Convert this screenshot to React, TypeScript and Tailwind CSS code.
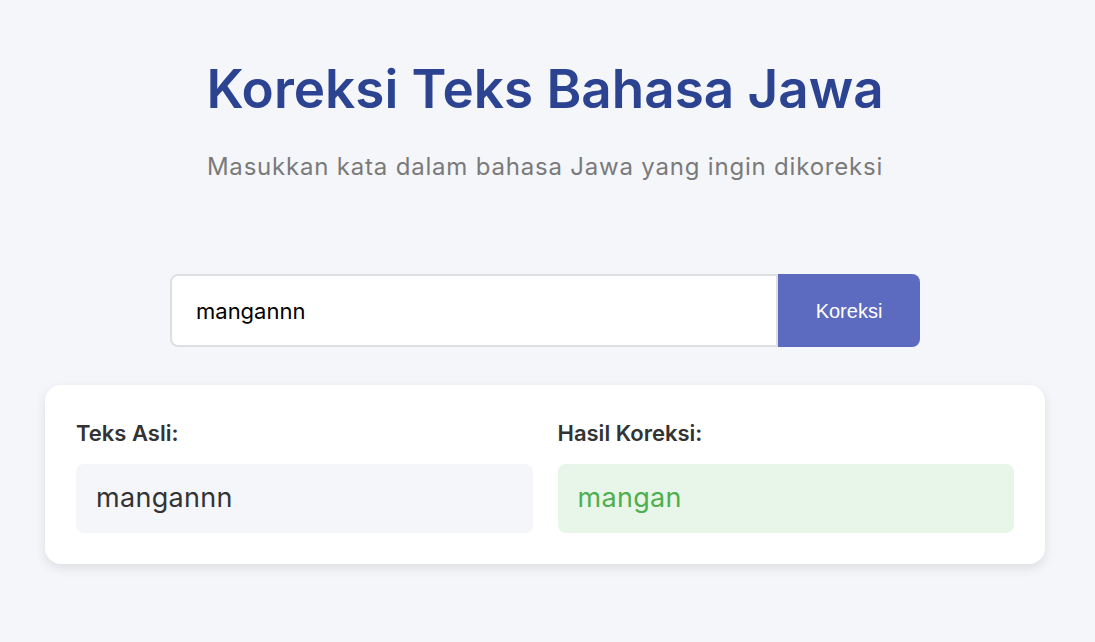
export default function App() {
  const original = "mangannn";
  const corrected = "mangan";

  return (
    <div className="min-h-screen bg-[#f5f6fa] pr-[5px] pt-[58px] font-['Inter','Noto_Sans',sans-serif]">
      <div className="mx-auto max-w-[1000px]">
        <h1 className="text-center text-[53px] font-semibold leading-[62px] text-[#2b4391]">
          Koreksi Teks Bahasa Jawa
        </h1>
        <p className="mt-[31px] text-center text-[24px] leading-[32px] tracking-[0.8px] text-[#7a7a7a]">
          Masukkan kata dalam bahasa Jawa yang ingin dikoreksi
        </p>

        <form
          className="mx-auto mt-[91px] flex h-[73px] w-[750px]"
          onSubmit={(e) => e.preventDefault()}
        >
          <input
            type="text"
            defaultValue={original}
            className="h-full flex-1 rounded-l-lg border-2 border-[#dedfe3] bg-white px-[24px] text-[22px] text-black outline-none"
          />
          <button
            type="submit"
            className="h-full w-[142px] rounded-r-lg bg-[#5c6bc0] font-['Liberation_Sans',Arial,sans-serif] text-[20px] text-white"
          >
            Koreksi
          </button>
        </form>

        <div className="mt-[38px] grid grid-cols-2 gap-[25px] rounded-2xl bg-white px-[31px] pb-[31px] pt-[34px] shadow-[0_4px_12px_rgba(0,0,0,0.1)]">
          <div>
            <h3 className="mb-[17px] text-[22px] font-semibold leading-[28px] text-[#333]">
              Teks Asli:
            </h3>
            <div className="flex h-[69px] items-center rounded-lg bg-[#f5f6fa] px-[20px] text-[27px] tracking-[0.3px] text-[#333]">
              {original}
            </div>
          </div>
          <div>
            <h3 className="mb-[17px] text-[22px] font-semibold leading-[28px] text-[#333]">
              Hasil Koreksi:
            </h3>
            <div className="flex h-[69px] items-center rounded-lg bg-[#e8f5e9] px-[20px] text-[27px] tracking-[0.3px] text-[#4caf50]">
              {corrected}
            </div>
          </div>
        </div>
      </div>
    </div>
  );
}
